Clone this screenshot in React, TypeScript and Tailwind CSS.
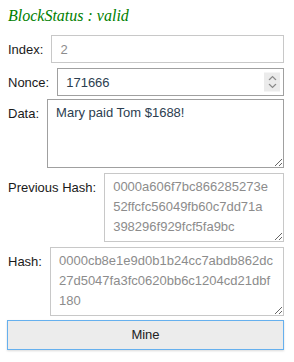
import React from "react";

const prevHash = "0000a606f7bc866285273e52ffcfc56049fb60c7dd71a398296f929fcf5fa9bc";
const hash = "0000cb8e1e9d0b1b24cc7abdb862dc27d5047fa3fc0620bb6c1204cd21dbf180";

function Spinner() {
  return (
    <span className="absolute right-[4px] top-1/2 -translate-y-1/2 w-[16px] h-[19px] bg-[#ebebeb] flex flex-col items-center justify-center gap-[3px]">
      <svg width="9" height="5" viewBox="0 0 9 5" fill="none">
        <path d="M1 4.5 L4.5 1 L8 4.5" stroke="#8a8a8a" strokeWidth="1.2" />
      </svg>
      <svg width="9" height="5" viewBox="0 0 9 5" fill="none">
        <path d="M1 0.5 L4.5 4 L8 0.5" stroke="#8a8a8a" strokeWidth="1.2" />
      </svg>
    </span>
  );
}

export default function App() {
  return (
    <div className="w-[294px] h-[362px] bg-white pl-2 pr-[10px] font-['Liberation_Sans',Arial,sans-serif] text-[13px] text-[#1a1a1a]">
      <div className="pt-[7px] h-[35px] font-['Liberation_Serif','Times_New_Roman',serif] italic text-[16px] leading-[18px] text-[#008000]">
        BlockStatus : valid
      </div>

      <div className="flex items-center gap-2">
        <label className="leading-[15px]">Index:</label>
        <input
          readOnly
          value="2"
          className="flex-1 min-w-0 h-[28px] border border-[#c8c8c8] px-2 text-[#8c8c8c] outline-none"
        />
      </div>

      <div className="flex items-center gap-2 mt-[5px]">
        <label className="leading-[15px]">Nonce:</label>
        <div className="relative flex-1 min-w-0">
          <input
            readOnly
            value="171666"
            className="w-full h-[28px] border border-[#a0a0a0] px-2 text-[#2c3e50] outline-none"
          />
          <Spinner />
        </div>
      </div>

      <div className="flex items-start gap-2 mt-[3px]">
        <label className="pt-[7px] leading-[15px]">Data:</label>
        <textarea
          readOnly
          value="Mary paid Tom $1688!"
          className="flex-1 min-w-0 h-[69px] border border-[#a0a0a0] pl-2 pr-2 pt-[3px] leading-5 text-[#2c3e50] outline-none"
        />
      </div>

      <div className="flex items-start gap-2 mt-[5px]">
        <label className="pt-[7px] leading-[15px]">Previous Hash:</label>
        <textarea
          readOnly
          value={prevHash}
          className="flex-1 min-w-0 h-[69px] border border-[#c8c8c8] pl-2 pr-[14px] pt-[3px] leading-5 text-[#8c8c8c] outline-none"
        />
      </div>

      <div className="flex items-start gap-2 mt-[5px]">
        <label className="pt-[7px] leading-[15px]">Hash:</label>
        <textarea
          readOnly
          value={hash}
          className="flex-1 min-w-0 h-[69px] border border-[#c8c8c8] pl-2 pr-2 pt-[3px] leading-5 text-[#8c8c8c] outline-none"
        />
      </div>

      <button className="mt-[4px] -ml-px w-[calc(100%+1px)] h-[30px] border border-[#66b0ee] bg-[#ececec] text-[#222] shadow-[0_1px_2px_rgba(0,0,0,0.15)]">
        Mine
      </button>
    </div>
  );
}
